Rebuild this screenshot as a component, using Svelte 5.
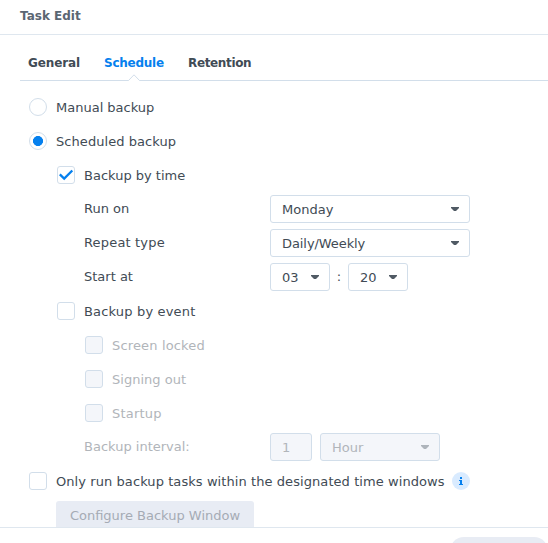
<script>
  const events = [
    { label: 'Screen locked', ls: 0.15 },
    { label: 'Signing out', ls: 0.02 },
    { label: 'Startup', ls: 0.2 }
  ];
</script>

{#snippet arrow()}
  <svg class="arrow" width="8" height="4" viewBox="0 0 8 4"><path d="M0 0H8V1L5 4H3L0 1Z" fill="currentColor" /></svg>
{/snippet}

<div class="dialog">
  <header><span class="title">Task Edit</span></header>
  <nav>
    <span class="general">General</span>
    <span class="active">Schedule
      <svg class="notch" width="12" height="7" viewBox="0 0 12 7"><path d="M0 6.5L.5 6.5L6 .8L11.5 6.5H12V7H0Z" fill="#fff" /><path d="M0 6.5H.5L6 .8L11.5 6.5H12" fill="none" stroke="#d2deea" /></svg>
    </span>
    <span class="retention">Retention</span>
  </nav>

  <main>
    <div class="row"><i class="radio"></i><span class="label">Manual backup</span></div>
    <div class="row"><i class="radio on"></i><span class="label scheduled">Scheduled backup</span></div>
    <div class="row l1">
      <i class="box"><svg width="16" height="16" viewBox="0 0 16 16"><path d="M1.8 7.4L6.2 11.6L14.3 3.5" fill="none" stroke="#0580ee" stroke-width="2.3" /></svg></i>
      <span class="label">Backup by time</span>
    </div>
    <div class="row l2"><span class="name">Run on</span><div class="select wide"><span>Monday</span>{@render arrow()}</div></div>
    <div class="row l2"><span class="name repeat">Repeat type</span><div class="select wide"><span class="daily">Daily/Weekly</span>{@render arrow()}</div></div>
    <div class="row l2">
      <span class="name">Start at</span>
      <div class="select time"><span>03</span>{@render arrow()}</div>
      <span class="colon">:</span>
      <div class="select time"><span>20</span>{@render arrow()}</div>
    </div>
    <div class="row l1"><i class="box"></i><span class="label byevent">Backup by event</span></div>
    {#each events as e}
      <div class="row l2 off"><i class="box"></i><span class="label" style="letter-spacing: {e.ls}px">{e.label}</span></div>
    {/each}
    <div class="row l2 off">
      <span class="name">Backup interval:</span>
      <div class="select num"><span>1</span></div>
      <div class="select hour"><span>Hour</span>{@render arrow()}</div>
    </div>
    <div class="row"><i class="box"></i><span class="label only">Only run backup tasks within the designated time windows</span>
      <svg class="info" width="18" height="18" viewBox="0 0 18 18"><circle cx="9" cy="9" r="9" fill="#d9ebff" /><path d="M8 5h2v2H8zM7 8h3v4h1v1H7v-1h1V9H7z" fill="#0580ee" /></svg>
    </div>
    <div class="row last"><div class="configure"><span>Configure Backup Window</span></div></div>
  </main>
  <footer><div class="action"></div></footer>
</div>

<style>
  :global(body) { margin: 0; background: #fff; }
  .dialog {
    width: 548px; height: 543px; overflow: hidden; box-sizing: border-box;
    display: flex; flex-direction: column; background: #fff;
    font: 13px/18px Verdana, "DejaVu Sans", sans-serif; color: #414b55;
    white-space: nowrap;
  }
  header { height: 34px; flex: none; border-bottom: 1px solid #dfe7ef; padding-left: 20px; line-height: 33px; font-size: 12px; font-weight: bold; color: #5b6673; }
  nav { height: 45px; flex: none; margin-left: 20px; padding-left: 8px; border-bottom: 1px solid #d2deea; display: flex; gap: 24px; line-height: 57px; font-size: 12px; font-weight: bold; letter-spacing: -0.25px; }
  nav span { position: relative; }
  .general { width: 52px; letter-spacing: -0.12px; }
  .active { width: 60px; color: #0580ee; }
  .retention { letter-spacing: -0.35px; }
  .notch { position: absolute; left: 24px; top: 39px; }
  main { height: 446px; flex: none; padding: 9px 0 0 29px; overflow: hidden; box-sizing: border-box; }
  .row { height: 34px; display: flex; align-items: center; }
  .l1 { padding-left: 28px; }
  .l2 { padding-left: 55px; }
  .l2.off:has(.box) { padding-left: 56px; }
  .label, .select span, .configure span { padding-top: 2px; }
  .scheduled { letter-spacing: 0.06px; }
  .byevent { letter-spacing: 0.17px; }
  .repeat { letter-spacing: 0.17px; }
  .daily { letter-spacing: -0.08px; }
  .only { letter-spacing: 0.075px; }
  .radio, .box { width: 18px; height: 18px; box-sizing: border-box; border: 1px solid #d2deea; border-radius: 3px; margin-right: 9px; flex: none; display: block; }
  .box svg { display: block; }
  .radio { border-radius: 50%; }
  .on { background: radial-gradient(circle, #0580ee 4.7px, transparent 5.3px); }
  .name { width: 186px; flex: none; }
  .select { height: 28px; box-sizing: border-box; border: 1px solid #d2deea; border-radius: 3px; display: flex; align-items: center; justify-content: space-between; padding: 0 10px 0 11px; }
  .arrow { color: #505a64; flex: none; }
  .wide { width: 200px; }
  .time { width: 60px; }
  .colon { width: 18px; text-align: center; }
  .off { color: #b1b5ba; }
  .off .box, .off .select { background: #f4f6fa; }
  .off .arrow { color: #aeb4bb; }
  .num { width: 42px; margin-right: 8px; }
  .hour { width: 120px; }
  .info { margin-left: 7px; flex: none; }
  .last { padding-left: 27px; }
  .configure { width: 198px; height: 28px; border-radius: 3px; background: #e8ecf4; color: #a5abb4; display: flex; align-items: center; justify-content: center; }
  footer { flex: 1; border-top: 1px solid #dfe7ef; display: flex; justify-content: flex-end; padding-top: 9px; }
  .action { width: 98px; height: 28px; border-radius: 14px; background: #e8ecf4; }
</style>
